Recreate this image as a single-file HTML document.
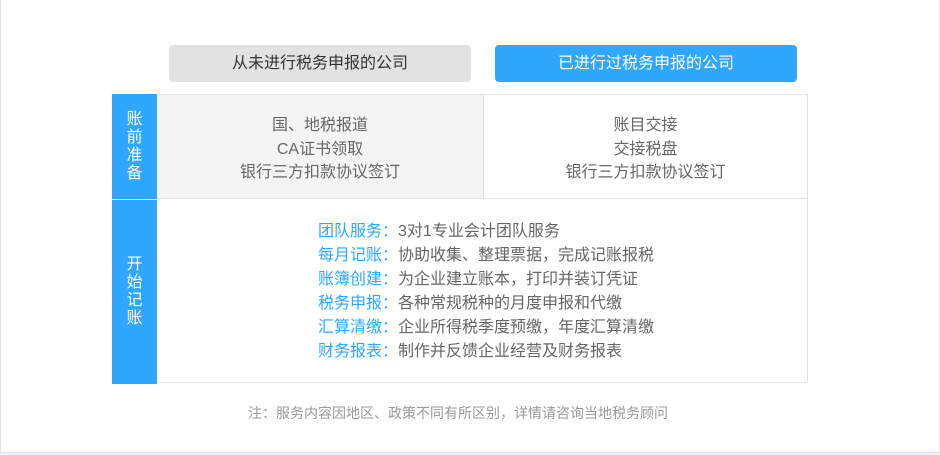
<!DOCTYPE html>
<html><head><meta charset="utf-8"><style>
*{margin:0;padding:0;box-sizing:border-box}
body{width:940px;height:455px;background:#f0f0f5;font-family:"Liberation Sans","Noto Sans CJK SC",sans-serif;position:relative;overflow:hidden}
.page{position:absolute;left:0;top:0;width:940px;height:453px;background:#fff;border:1px solid #e4e4ec;border-top:none}
.btn{position:absolute;top:45px;height:37px;width:302px;border-radius:4px;text-align:center;line-height:37px;font-size:16px}
.b1{left:168px;background:#e2e2e2;color:#333}
.b2{left:494px;background:#2ea7fc;color:#fff}
.tbl{position:absolute;left:111px;top:94px;width:696px;height:289px;border:1px solid #e2e2e2;border-left:none}
.side{position:absolute;left:0;width:45px;background:#2ea7fc;color:#fff;font-size:16px;line-height:18px;text-align:center;display:flex;align-items:center;justify-content:center}
.c{position:absolute;text-align:center;font-size:16px;color:#666;line-height:23.5px;padding-top:19px}
.list{position:absolute;left:206px;top:125px;font-size:16px;line-height:24px;color:#666}
.list span{color:#2ea7fc}
.note{position:absolute;left:-13px;width:940px;top:403px;text-align:center;font-size:14px;color:#999}
</style></head><body><div class="page">
<div class="btn b1">从未进行税务申报的公司</div>
<div class="btn b2">已进行过税务申报的公司</div>
<div class="tbl">
<div class="side" style="top:-1px;height:105px">账<br>前<br>准<br>备</div>
<div class="side" style="top:104px;height:185px;border-top:1px solid #e2e2e2">开<br>始<br>记<br>账</div>
<div class="c" style="left:45px;top:0;width:327px;height:104px;background:#f4f4f4;border-right:1px solid #e2e2e2;border-bottom:1px solid #e2e2e2">国、地税报道<br>CA证书领取<br>银行三方扣款协议签订</div>
<div class="c" style="left:372px;top:0;width:323px;height:104px;border-bottom:1px solid #e2e2e2">账目交接<br>交接税盘<br>银行三方扣款协议签订</div>
<div class="list">
<div><span>团队服务：</span>3对1专业会计团队服务</div>
<div><span>每月记账：</span>协助收集、整理票据，完成记账报税</div>
<div><span>账簿创建：</span>为企业建立账本，打印并装订凭证</div>
<div><span>税务申报：</span>各种常规税种的月度申报和代缴</div>
<div><span>汇算清缴：</span>企业所得税季度预缴，年度汇算清缴</div>
<div><span>财务报表：</span>制作并反馈企业经营及财务报表</div>
</div>
</div>
<div class="note">注：服务内容因地区、政策不同有所区别，详情请咨询当地税务顾问</div>
</div></body></html>
